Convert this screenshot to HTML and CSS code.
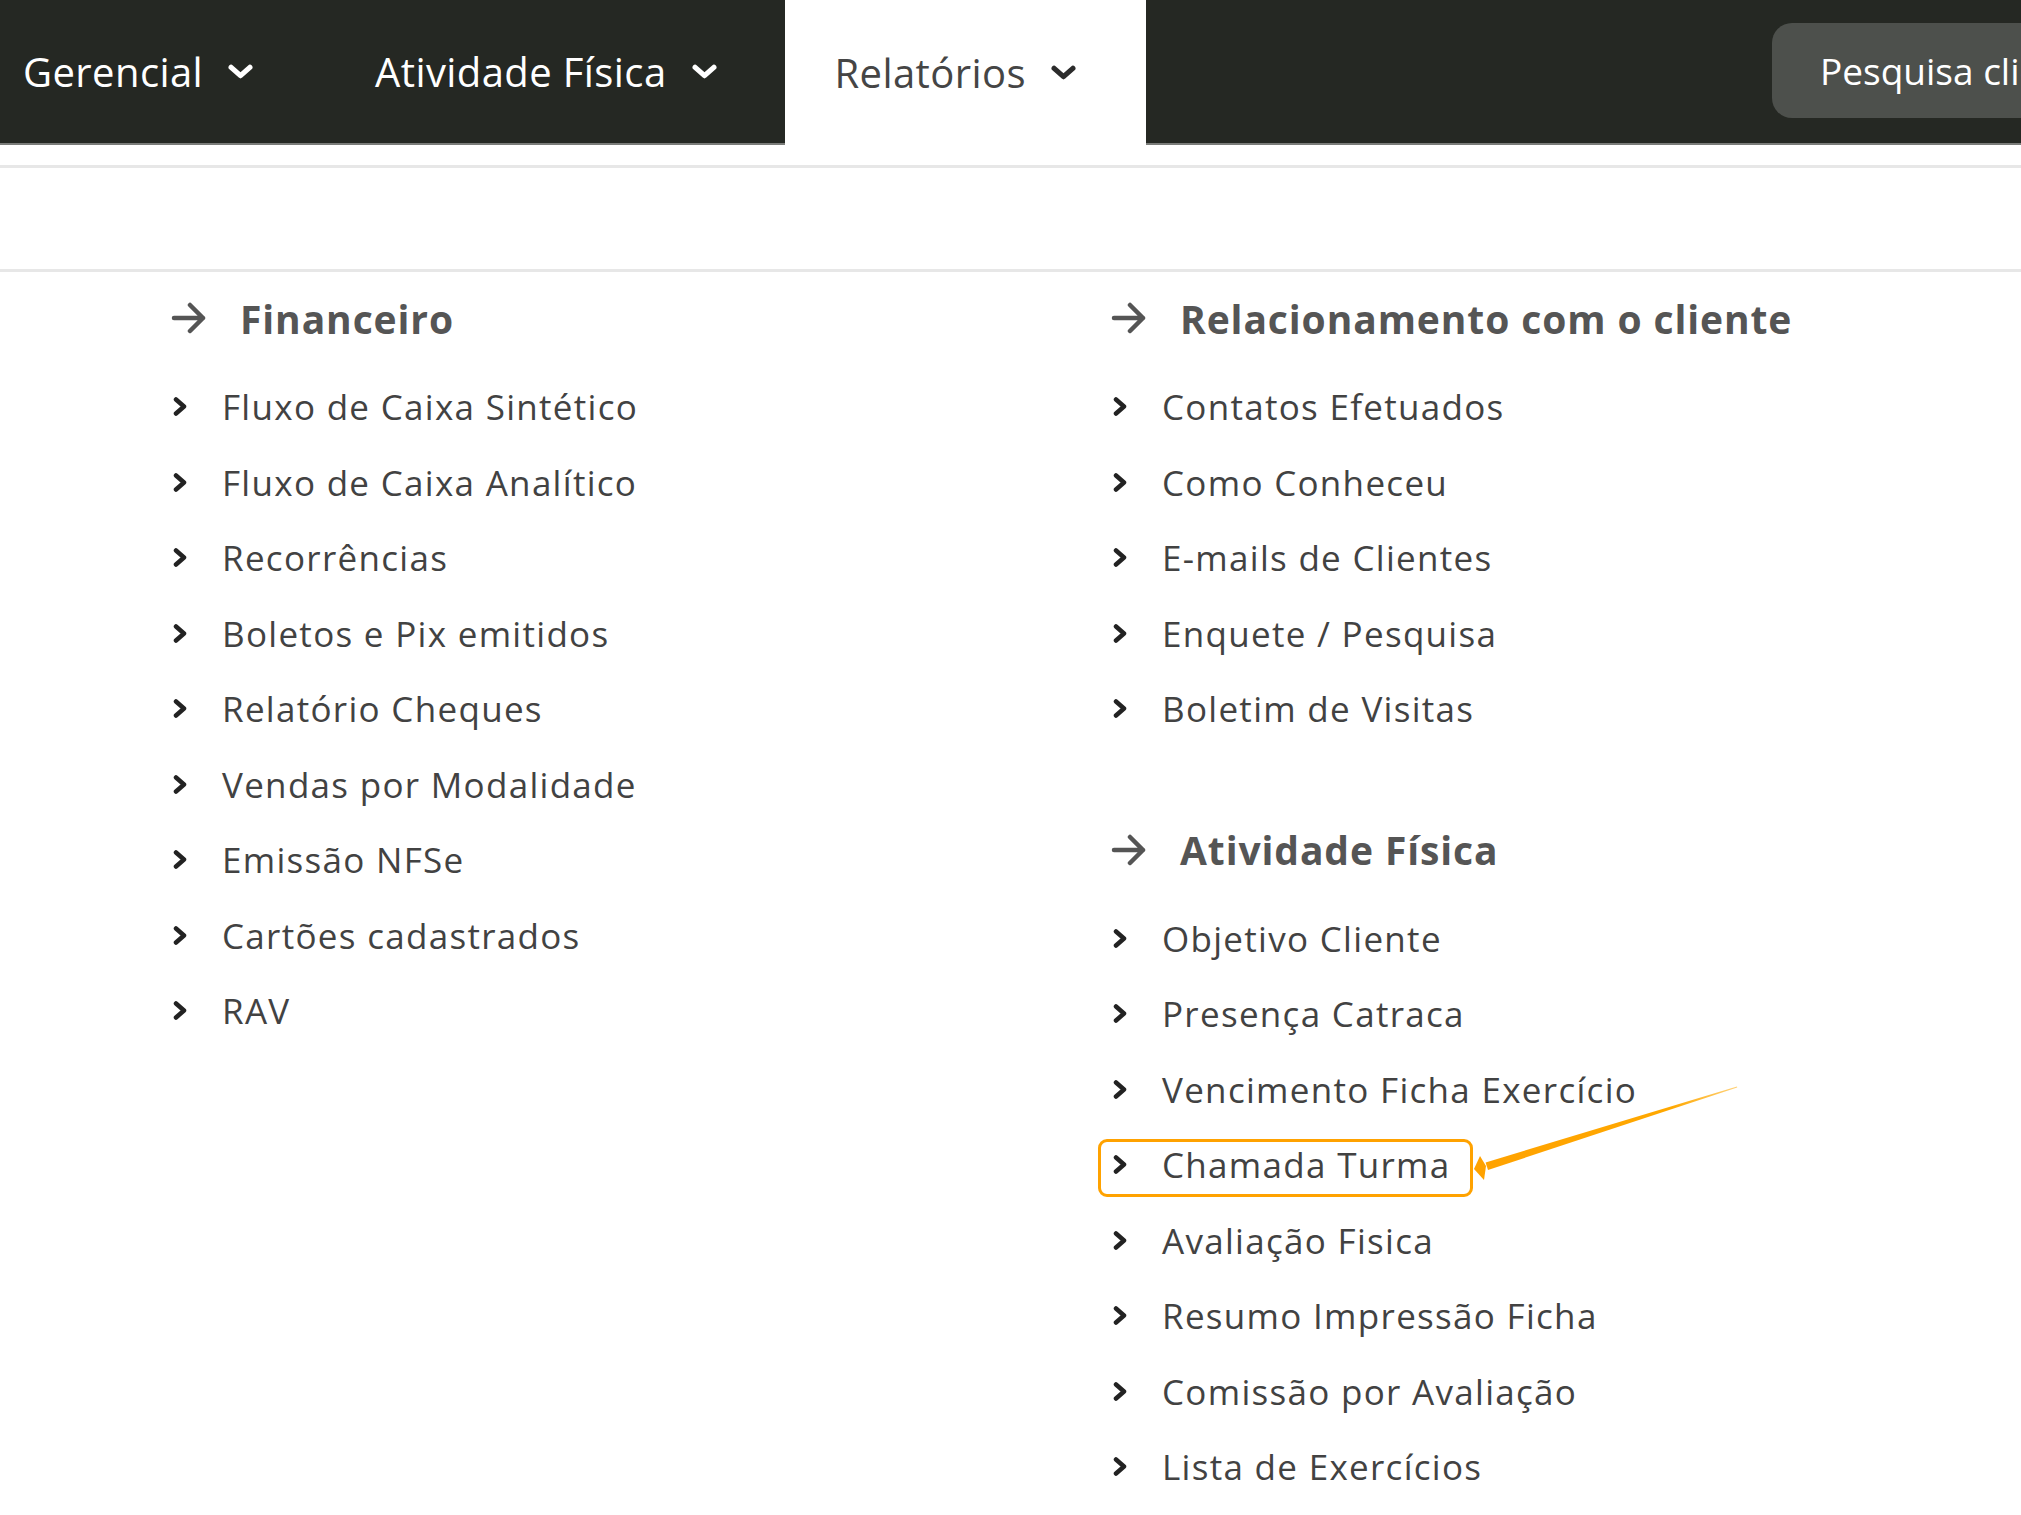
FILE: index.html
```html
<!DOCTYPE html>
<html lang="pt-BR">
<head>
<meta charset="utf-8">
<title>Relatórios</title>
<link rel="stylesheet" href="styles.css">
</head>
<body>
<div class="page">
  <nav class="topnav">
    <div class="nav-item nav-first">Gerencial
      <svg class="nav-chev" viewBox="0 0 24 16"><path d="M3 4 L12 12 L21 4" /></svg>
    </div>
    <div class="nav-item">Atividade Física
      <svg class="nav-chev" viewBox="0 0 24 16"><path d="M3 4 L12 12 L21 4" /></svg>
    </div>
    <div class="nav-item nav-active">Relatórios
      <svg class="nav-chev" viewBox="0 0 24 16"><path d="M3 4 L12 12 L21 4" /></svg>
    </div>
    <div class="nav-spacer"></div>
    <div class="search">Pesquisa clientes</div>
  </nav>

  <div class="subbar"></div>

  <div class="menu">
    <div class="col">
      <section class="group">
        <h2 class="group-title">
          <svg class="head-arrow" viewBox="0 0 36 32"><path d="M3 16 H32 M19 3 L32 16 L19 29" /></svg>
          Financeiro
        </h2>
        <ul class="items">
          <li class="item"><svg class="chev" viewBox="0 0 15 19"><path d="M3 2.5 L11 9.5 L3 16.5" /></svg>Fluxo de Caixa Sintético</li>
          <li class="item"><svg class="chev" viewBox="0 0 15 19"><path d="M3 2.5 L11 9.5 L3 16.5" /></svg>Fluxo de Caixa Analítico</li>
          <li class="item"><svg class="chev" viewBox="0 0 15 19"><path d="M3 2.5 L11 9.5 L3 16.5" /></svg>Recorrências</li>
          <li class="item"><svg class="chev" viewBox="0 0 15 19"><path d="M3 2.5 L11 9.5 L3 16.5" /></svg>Boletos e Pix emitidos</li>
          <li class="item"><svg class="chev" viewBox="0 0 15 19"><path d="M3 2.5 L11 9.5 L3 16.5" /></svg>Relatório Cheques</li>
          <li class="item"><svg class="chev" viewBox="0 0 15 19"><path d="M3 2.5 L11 9.5 L3 16.5" /></svg>Vendas por Modalidade</li>
          <li class="item"><svg class="chev" viewBox="0 0 15 19"><path d="M3 2.5 L11 9.5 L3 16.5" /></svg>Emissão NFSe</li>
          <li class="item"><svg class="chev" viewBox="0 0 15 19"><path d="M3 2.5 L11 9.5 L3 16.5" /></svg>Cartões cadastrados</li>
          <li class="item"><svg class="chev" viewBox="0 0 15 19"><path d="M3 2.5 L11 9.5 L3 16.5" /></svg>RAV</li>
        </ul>
      </section>
    </div>
    <div class="col">
      <section class="group">
        <h2 class="group-title">
          <svg class="head-arrow" viewBox="0 0 36 32"><path d="M3 16 H32 M19 3 L32 16 L19 29" /></svg>
          Relacionamento com o cliente
        </h2>
        <ul class="items">
          <li class="item"><svg class="chev" viewBox="0 0 15 19"><path d="M3 2.5 L11 9.5 L3 16.5" /></svg>Contatos Efetuados</li>
          <li class="item"><svg class="chev" viewBox="0 0 15 19"><path d="M3 2.5 L11 9.5 L3 16.5" /></svg>Como Conheceu</li>
          <li class="item"><svg class="chev" viewBox="0 0 15 19"><path d="M3 2.5 L11 9.5 L3 16.5" /></svg>E-mails de Clientes</li>
          <li class="item"><svg class="chev" viewBox="0 0 15 19"><path d="M3 2.5 L11 9.5 L3 16.5" /></svg>Enquete / Pesquisa</li>
          <li class="item"><svg class="chev" viewBox="0 0 15 19"><path d="M3 2.5 L11 9.5 L3 16.5" /></svg>Boletim de Visitas</li>
        </ul>
      </section>
      <section class="group group-next">
        <h2 class="group-title">
          <svg class="head-arrow" viewBox="0 0 36 32"><path d="M3 16 H32 M19 3 L32 16 L19 29" /></svg>
          Atividade Física
        </h2>
        <ul class="items">
          <li class="item"><svg class="chev" viewBox="0 0 15 19"><path d="M3 2.5 L11 9.5 L3 16.5" /></svg>Objetivo Cliente</li>
          <li class="item"><svg class="chev" viewBox="0 0 15 19"><path d="M3 2.5 L11 9.5 L3 16.5" /></svg>Presença Catraca</li>
          <li class="item"><svg class="chev" viewBox="0 0 15 19"><path d="M3 2.5 L11 9.5 L3 16.5" /></svg>Vencimento Ficha Exercício</li>
          <li class="item item-highlight"><svg class="chev" viewBox="0 0 15 19"><path d="M3 2.5 L11 9.5 L3 16.5" /></svg>Chamada Turma</li>
          <li class="item"><svg class="chev" viewBox="0 0 15 19"><path d="M3 2.5 L11 9.5 L3 16.5" /></svg>Avaliação Fisica</li>
          <li class="item"><svg class="chev" viewBox="0 0 15 19"><path d="M3 2.5 L11 9.5 L3 16.5" /></svg>Resumo Impressão Ficha</li>
          <li class="item"><svg class="chev" viewBox="0 0 15 19"><path d="M3 2.5 L11 9.5 L3 16.5" /></svg>Comissão por Avaliação</li>
          <li class="item"><svg class="chev" viewBox="0 0 15 19"><path d="M3 2.5 L11 9.5 L3 16.5" /></svg>Lista de Exercícios</li>
        </ul>
      </section>
    </div>
  </div>

  <svg class="annotation" viewBox="0 0 2021 1515">
    <defs>
      <linearGradient id="arrowGrad" x1="1737" y1="1087" x2="1474" y2="1170" gradientUnits="userSpaceOnUse">
        <stop offset="0" stop-color="#ffd27a"/>
        <stop offset="0.25" stop-color="#ffa800"/>
        <stop offset="1" stop-color="#ffa200"/>
      </linearGradient>
    </defs>
    <polygon fill="url(#arrowGrad)" points="1737,1086.6 1737.2,1087.4 1488,1170 1485.6,1162.4"/>
    <polygon fill="#ffa200" points="1474,1169 1480,1156 1486,1166 1484,1180"/>
  </svg>
</div>
</body>
</html>
```

FILE: styles.css
```css
html, body {
  margin: 0;
  padding: 0;
  background: #ffffff;
}

body {
  font-family: "Open Sans", "Noto Sans", "Liberation Sans", sans-serif;
  width: 2021px;
  height: 1515px;
  overflow: hidden;
}

.page {
  position: relative;
  width: 2021px;
  height: 1515px;
}

/* ---------- top navigation ---------- */
.topnav {
  display: flex;
  align-items: stretch;
  height: 143px;
  background: #252823;
  border-bottom: 2px solid #7a7c79;
}

.nav-item {
  display: flex;
  align-items: center;
  gap: 25px;
  padding: 0 68px 0 50px;
  font-size: 40px;
  letter-spacing: 0.4px;
  color: #ffffff;
  white-space: nowrap;
}

.nav-first {
  padding-left: 23px;
  padding-right: 72px;
}

.nav-active {
  background: #ffffff;
  color: #454545;
  margin-bottom: -2px;
  padding-right: 70px;
}

.nav-chev {
  width: 25px;
  height: 17px;
  fill: none;
  stroke: currentColor;
  stroke-width: 5;
  stroke-linecap: round;
  stroke-linejoin: round;
}

.nav-active .nav-chev {
  stroke: #2b2b2b;
}

.nav-spacer {
  flex: 1;
}

.search {
  align-self: flex-start;
  margin-top: 23px;
  width: 320px;
  flex-shrink: 0;
  height: 95px;
  box-sizing: border-box;
  padding-left: 48px;
  display: flex;
  align-items: center;
  background: #4d504c;
  border-radius: 20px 0 0 20px;
  color: #ffffff;
  font-size: 37px;
  white-space: nowrap;
  overflow: hidden;
  margin-right: -71px;
}

/* ---------- empty sub bar ---------- */
.subbar {
  margin-top: 20px;
  height: 101px;
  border-top: 3px solid #e7e7e7;
  border-bottom: 3px solid #e7e7e7;
}

/* ---------- mega menu ---------- */
.menu {
  display: grid;
  grid-template-columns: 940px 1fr;
  padding-left: 171px;
  padding-top: 21px;
}

.group-title {
  display: flex;
  align-items: center;
  gap: 33px;
  height: 50px;
  margin: 0 0 26px 0;
  font-size: 39px;
  font-weight: 700;
  letter-spacing: 0.9px;
  color: #555555;
  white-space: nowrap;
}

.head-arrow {
  width: 36px;
  height: 32px;
  flex-shrink: 0;
  fill: none;
  stroke: #555555;
  stroke-width: 4.5;
  stroke-linecap: round;
  stroke-linejoin: round;
}

.group-next {
  margin-top: 78px;
}

.items {
  list-style: none;
  margin: 0;
  padding: 0;
}

.item {
  position: relative;
  display: flex;
  align-items: center;
  gap: 34px;
  height: 75.5px;
  padding-left: 2px;
  font-size: 35px;
  letter-spacing: 1.3px;
  color: #424242;
  white-space: nowrap;
}

.chev {
  width: 15px;
  height: 19px;
  flex-shrink: 0;
  fill: none;
  stroke: #222222;
  stroke-width: 4.5;
  stroke-linecap: round;
  stroke-linejoin: round;
}

.item-highlight::after {
  content: "";
  position: absolute;
  left: -13px;
  top: 12px;
  width: 375px;
  height: 58px;
  box-sizing: border-box;
  border: 3.5px solid #ffa200;
  border-radius: 9px;
}

/* ---------- annotation arrow overlay ---------- */
.annotation {
  position: absolute;
  left: 0;
  top: 0;
  width: 2021px;
  height: 1515px;
  pointer-events: none;
}
```
